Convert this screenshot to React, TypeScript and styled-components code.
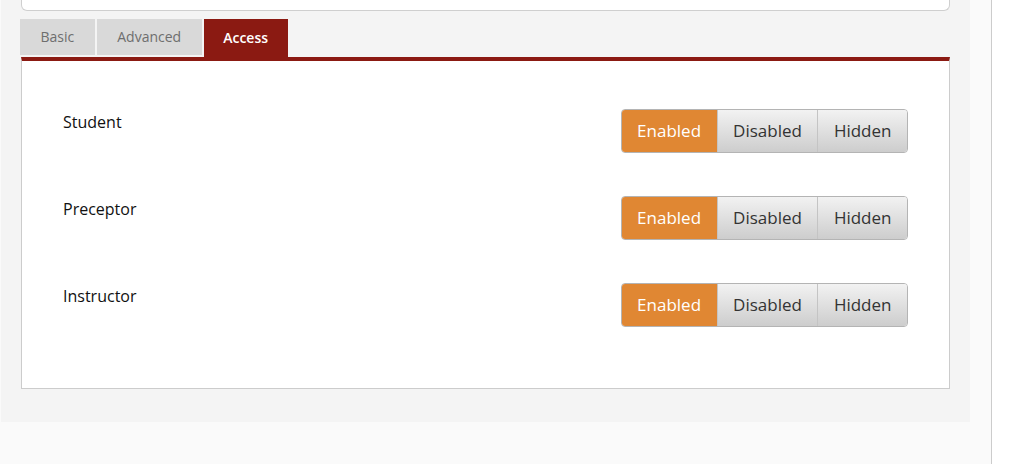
import React from "react";
import styled, { createGlobalStyle } from "styled-components";

const GlobalStyle = createGlobalStyle`
  html, body {
    margin: 0;
    padding: 0;
    background: #fafafa;
    font-family: "Open Sans", "Noto Sans", sans-serif;
  }
`;

const roles = ["Student", "Preceptor", "Instructor"];
const options = ["Enabled", "Disabled", "Hidden"];
const tabs = ["Basic", "Advanced", "Access"];

const App = () => (
  <Page>
    <GlobalStyle />
    <Main>
      <TopCard />
      <TabList>
        {tabs.map((t) => (
          <Tab key={t} $active={t === "Access"}>
            {t}
          </Tab>
        ))}
      </TabList>
      <TabPanel>
        {roles.map((r) => (
          <Row key={r}>
            <Label>{r}</Label>
            <ButtonGroup>
              {options.map((o) => (
                <Option key={o} $active={o === "Enabled"}>
                  {o}
                </Option>
              ))}
            </ButtonGroup>
          </Row>
        ))}
      </TabPanel>
    </Main>
    <Sidebar />
  </Page>
);

const Page = styled.div`
  display: flex;
  height: 464px;
  overflow: hidden;
`;

const Main = styled.div`
  margin-left: 1px;
  width: 969px;
  height: 422px;
  background: #f4f4f4;
  padding: 0 20px 0 19px;
  box-sizing: border-box;
  flex-shrink: 0;
`;

const Sidebar = styled.div`
  margin-left: 21px;
  flex: 1;
  border-left: 1px solid #cccccc;
  background: #ffffff;
`;

const TopCard = styled.div`
  margin-left: 1px;
  height: 11px;
  background: #ffffff;
  border: 1px solid #cfcfcf;
  border-top: none;
  border-radius: 0 0 6px 6px;
  box-sizing: border-box;
`;

const TabList = styled.div`
  display: flex;
  gap: 2px;
  margin-top: 8px;
  height: 38px;
  align-items: flex-start;
`;

const Tab = styled.div<{ $active?: boolean }>`
  height: ${(p) => (p.$active ? "38px" : "36px")};
  padding: 0 ${(p) => (p.$active ? "19.5px" : "20.5px")} 1px;
  display: flex;
  align-items: center;
  font-size: 14px;
  font-weight: ${(p) => (p.$active ? 600 : 400)};
  color: ${(p) => (p.$active ? "#ffffff" : "#6e6e6e")};
  background: ${(p) => (p.$active ? "#8b1a12" : "#d9d9d9")};
  box-sizing: border-box;
`;

const TabPanel = styled.div`
  margin-left: 1px;
  background: #ffffff;
  border-top: 4px solid #8b1a12;
  border-left: 1px solid #cccccc;
  border-right: 1px solid #cccccc;
  border-bottom: 1px solid #cccccc;
  padding: 48px 41px 61px 41px;
  display: flex;
  flex-direction: column;
  gap: 43px;
`;

const Row = styled.div`
  display: flex;
  justify-content: space-between;
  align-items: flex-start;
`;

const Label = styled.div`
  font-size: 16px;
  line-height: 26px;
  color: #111111;
`;

const ButtonGroup = styled.div`
  display: flex;
  height: 44px;
  border: 1px solid #b4b4b4;
  border-radius: 4px;
  overflow: hidden;
  box-sizing: border-box;
`;

const Option = styled.div<{ $active?: boolean }>`
  display: flex;
  align-items: center;
  justify-content: center;
  padding: 0 15.5px 2px;
  font-size: 17px;
  color: ${(p) => (p.$active ? "#ffffff" : "#333333")};
  background: ${(p) =>
    p.$active ? "#e08733" : "linear-gradient(#f2f2f2, #cdcdcd)"};
  & + & {
    border-left: 1px solid #c4c4c4;
  }
`;

export default App;
